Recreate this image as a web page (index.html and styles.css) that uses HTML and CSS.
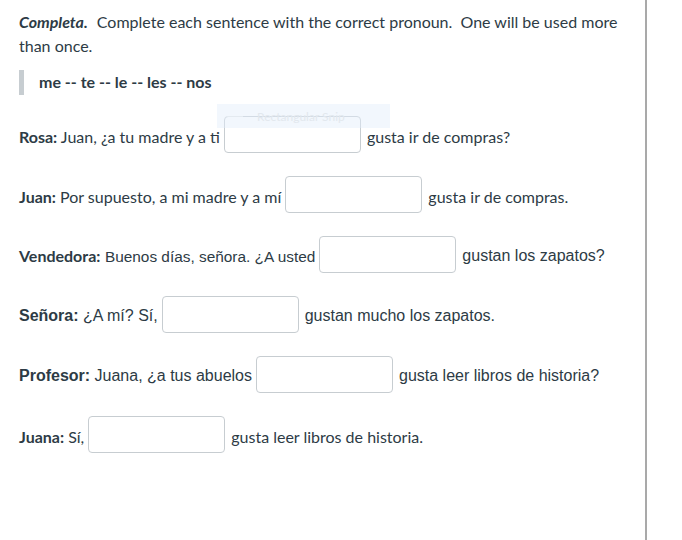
FILE: index.html
```html
<!DOCTYPE html>
<html lang="es">
<head>
<meta charset="utf-8">
<title>Completa</title>
<link rel="stylesheet" href="styles.css">
</head>
<body>
<div class="page">
  <div class="content">
    <p class="intro"><strong class="lead">Completa.</strong> <span>Complete each sentence with the correct pronoun.&nbsp; One will be used more</span><br><span>than once.</span></p>
    <blockquote class="options">me -- te -- le -- les -- nos</blockquote>

    <div class="row lato"><span class="txt"><b>Rosa:</b> Juan, ¿a tu madre y a ti</span><input class="blank" type="text"><span class="txt">gusta ir de compras?</span></div>
    <div class="row lato"><span class="txt"><b>Juan:</b> Por supuesto, a mi madre y a mí</span><input class="blank" type="text"><span class="txt">gusta ir de compras.</span></div>
    <div class="row arial"><span class="txt"><b class="lato">Vendedora:</b> <span class="narrow">Buenos días, señora. ¿A usted</span></span><input class="blank" type="text"><span class="txt">gustan los zapatos?</span></div>
    <div class="row arial"><span class="txt"><b>Señora:</b> ¿A mí? Sí,</span><input class="blank" type="text"><span class="txt">gustan mucho los zapatos.</span></div>
    <div class="row arial"><span class="txt"><b>Profesor:</b> Juana, ¿a tus abuelos</span><input class="blank" type="text"><span class="txt">gusta leer libros de historia?</span></div>
    <div class="row lato"><span class="txt"><b>Juana:</b> Sí,</span><input class="blank" type="text"><span class="txt">gusta leer libros de historia.</span></div>
  </div>
  <div class="snip"><span class="snip-icon"></span>Rectangular Snip</div>
</div>
</body>
</html>
```

FILE: styles.css
```css
html, body {
  margin: 0;
  padding: 0;
  background: #ffffff;
}

.page {
  position: relative;
  width: 645px;
  height: 540px;
  border-right: 2px solid #a9a9a9;
  box-sizing: content-box;
}

.content {
  padding: 10px 0 0 19px;
  color: #2d3b45;
  font-family: Lato, "Liberation Sans", sans-serif;
  font-size: 16px;
}

.intro {
  margin: 0;
  line-height: 24px;
  width: 610px;
  white-space: nowrap;
}

.intro .lead {
  font-weight: 700;
  font-style: italic;
  margin-right: 5px;
}

.options {
  margin: 12px 0 0 0;
  padding: 0 0 0 15px;
  border-left: 5px solid #c7cdd1;
  height: 25px;
  line-height: 24px;
  font-weight: 700;
  color: #2d3b45;
}

.row {
  display: flex;
  align-items: center;
  height: 37px;
  column-gap: 4px;
  margin-top: 23px;
  white-space: nowrap;
}

.options + .row {
  margin-top: 21px;
}

.txt {
  padding-top: 3px;
}

.lato {
  font-family: Lato, "Liberation Sans", sans-serif;
}

.arial {
  font-family: "Liberation Sans", Arial, sans-serif;
}

.narrow {
  font-size: 15.4px;
}

.row b {
  font-weight: 700;
}

.blank {
  width: 137px;
  height: 37px;
  box-sizing: border-box;
  margin: 0 2px 0 0;
  padding: 0 6px;
  border: 1px solid #c7cdd1;
  border-radius: 4px;
  background: #ffffff;
  font: inherit;
}

.snip {
  position: absolute;
  left: 217px;
  top: 104px;
  width: 173px;
  height: 24px;
  display: flex;
  align-items: center;
  gap: 14px;
  padding-left: 10px;
  box-sizing: border-box;
  background: rgba(226, 238, 250, 0.45);
  color: #e2e8ee;
  font-family: Lato, "Liberation Sans", sans-serif;
  font-size: 12px;
  pointer-events: none;
}

.snip-icon {
  width: 16px;
  height: 1px;
  background: #e4eaf0;
}
```
